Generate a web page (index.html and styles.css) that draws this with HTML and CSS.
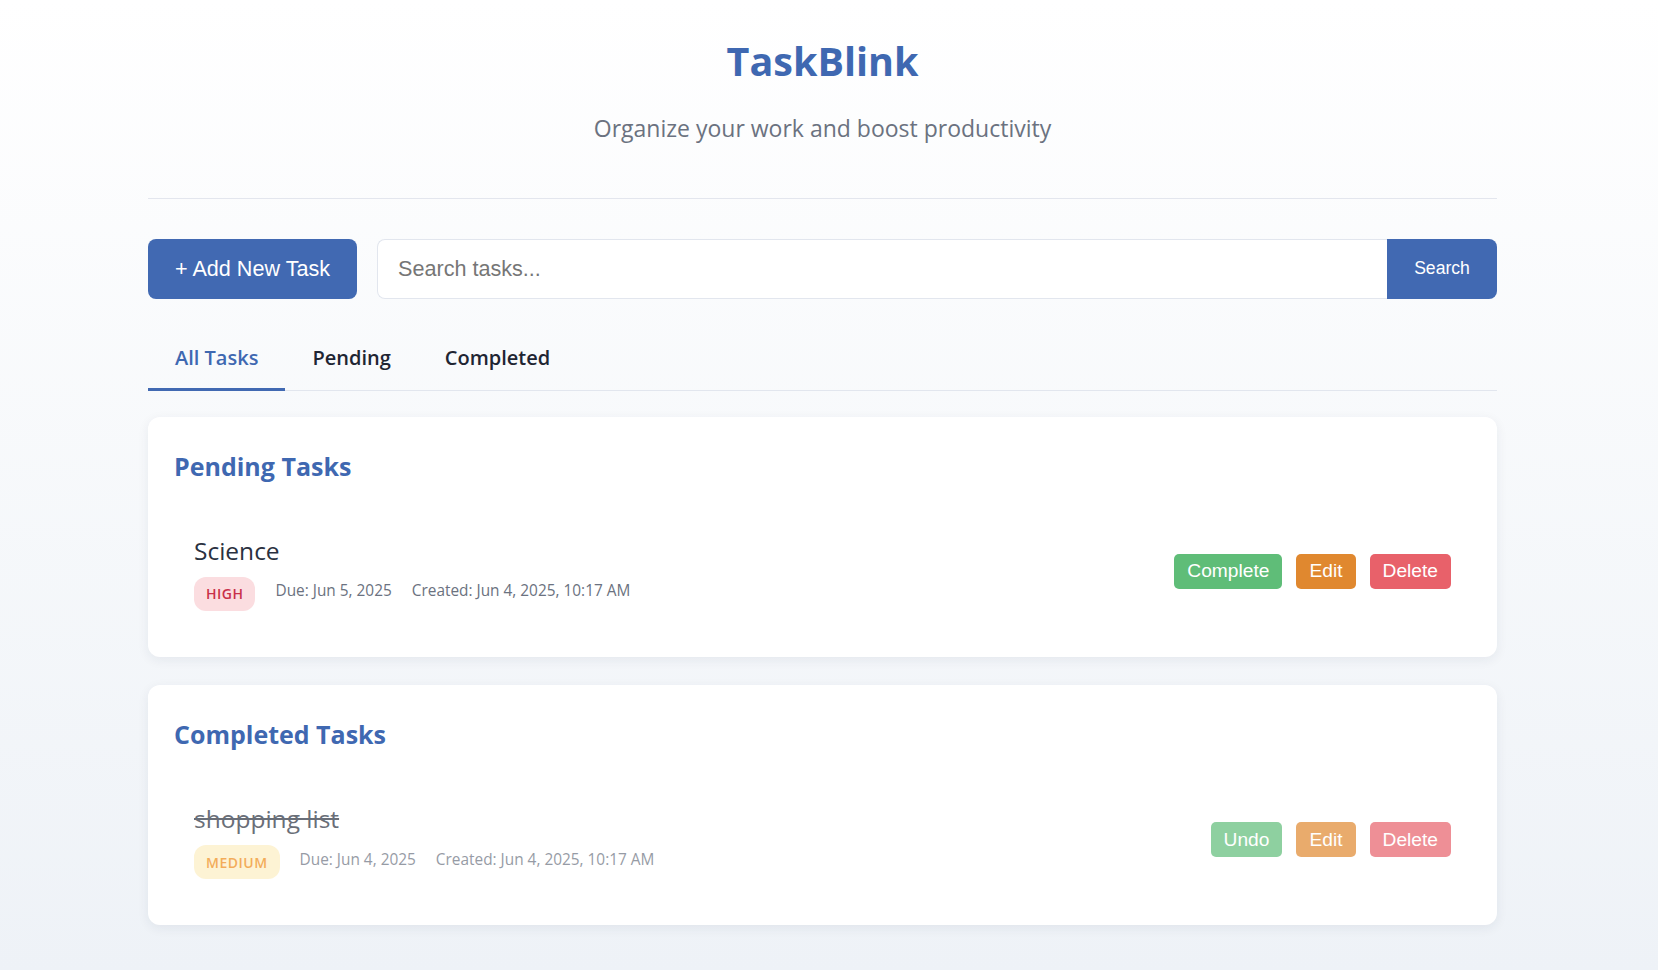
FILE: index.html
```html
<!DOCTYPE html>
<html lang="en">
<head>
<meta charset="utf-8">
<title>TaskBlink</title>
<link rel="stylesheet" href="styles.css">
</head>
<body>
<div class="app">
  <header class="header">
    <h1 class="title">TaskBlink</h1>
    <p class="subtitle">Organize your work and boost productivity</p>
  </header>

  <div class="controls">
    <button class="btn-add">+ Add New Task</button>
    <div class="search">
      <input class="search-input" type="text" placeholder="Search tasks...">
      <button class="search-btn">Search</button>
    </div>
  </div>

  <nav class="tabs">
    <button class="tab active">All Tasks</button>
    <button class="tab">Pending</button>
    <button class="tab">Completed</button>
  </nav>

  <section class="card">
    <h2 class="card-title">Pending Tasks</h2>
    <div class="task">
      <div class="task-info">
        <h3 class="task-title">Science</h3>
        <div class="meta">
          <span class="badge badge-high">HIGH</span>
          <span class="meta-text">Due: Jun 5, 2025</span>
          <span class="meta-text">Created: Jun 4, 2025, 10:17 AM</span>
        </div>
      </div>
      <div class="actions">
        <button class="btn btn-green">Complete</button>
        <button class="btn btn-orange">Edit</button>
        <button class="btn btn-red">Delete</button>
      </div>
    </div>
  </section>

  <section class="card">
    <h2 class="card-title">Completed Tasks</h2>
    <div class="task task-done">
      <div class="task-info">
        <h3 class="task-title">shopping list</h3>
        <div class="meta">
          <span class="badge badge-medium">MEDIUM</span>
          <span class="meta-text">Due: Jun 4, 2025</span>
          <span class="meta-text">Created: Jun 4, 2025, 10:17 AM</span>
        </div>
      </div>
      <div class="actions">
        <button class="btn btn-green">Undo</button>
        <button class="btn btn-orange">Edit</button>
        <button class="btn btn-red">Delete</button>
      </div>
    </div>
  </section>
</div>
</body>
</html>
```

FILE: styles.css
```css
* {
  box-sizing: border-box;
}

html,
body {
  margin: 0;
}

body {
  font-family: "Segoe UI", "Open Sans", "Noto Sans", sans-serif;
  background: linear-gradient(180deg, #ffffff 0%, #eef2f7 100%);
  min-height: 100vh;
  color: #2d3748;
  padding: 0 13px 0 0;
}

.app {
  max-width: 1349px;
  margin: 0 auto;
  padding-bottom: 40px;
}

/* Header */
.header {
  text-align: center;
  padding: 38px 0 55px;
  border-bottom: 1px solid #e3e6ee;
}

.title {
  margin: 0;
  font-size: 39.5px;
  line-height: 1.2;
  font-weight: 700;
  color: #3f68b1;
}

.subtitle {
  margin: 30px 0 0;
  font-size: 23px;
  line-height: 1.2;
  color: #6b7280;
}

/* Controls */
.controls {
  display: flex;
  gap: 20px;
  margin-top: 40px;
}

.btn-add {
  height: 60px;
  padding: 0 27px;
  border: none;
  border-radius: 8px;
  background: #4169b2;
  color: #fff;
  font-family: "Liberation Sans", Arial, sans-serif;
  font-size: 21.6px;
  cursor: pointer;
}

.search {
  flex: 1;
  display: flex;
}

.search-input {
  flex: 1;
  height: 60px;
  padding: 0 20px;
  border: 1px solid #e2e6ee;
  border-right: none;
  border-radius: 8px 0 0 8px;
  background: #fff;
  font-family: "Liberation Sans", Arial, sans-serif;
  font-size: 21.6px;
  color: #333;
  outline: none;
}

.search-input::placeholder {
  color: #767676;
}

.search-btn {
  width: 110px;
  height: 60px;
  border: none;
  border-radius: 0 8px 8px 0;
  background: #4169b2;
  color: #fff;
  font-family: "Liberation Sans", Arial, sans-serif;
  font-size: 17.6px;
  cursor: pointer;
}

/* Tabs */
.tabs {
  display: flex;
  margin-top: 30px;
  border-bottom: 1px solid #e2e6ee;
}

.tab {
  padding: 17px 27px 17px;
  margin-bottom: -1px;
  border: none;
  border-bottom: 3px solid transparent;
  background: none;
  font-family: inherit;
  font-size: 20px;
  line-height: 1.23;
  font-weight: 600;
  color: #1f2533;
  cursor: pointer;
}

.tab.active {
  color: #3f68b1;
  border-bottom-color: #4169b2;
}

/* Cards */
.card {
  margin-top: 26px;
  padding: 26px;
  background: #fff;
  border-radius: 12px;
  box-shadow: 0 3px 12px rgba(30, 40, 70, 0.07);
}

.card + .card {
  margin-top: 28px;
}

.card-title {
  margin: 8px 0 35px;
  font-size: 25px;
  line-height: 1.2;
  font-weight: 700;
  color: #3f68b1;
}

.task {
  display: flex;
  align-items: center;
  justify-content: space-between;
  padding: 20px;
}

.task-title {
  margin: 0;
  font-size: 24.5px;
  line-height: 1.2;
  font-weight: 400;
  color: #2a3140;
}

.meta {
  display: flex;
  align-items: center;
  gap: 20px;
  margin-top: 12px;
}

.meta-text {
  font-size: 15.4px;
  line-height: 1.2;
  color: #6b7280;
  margin-bottom: 5px;
}

.badge {
  display: inline-flex;
  align-items: center;
  height: 34px;
  padding: 0 12px;
  border-radius: 12px;
  font-size: 14px;
  font-weight: 600;
  letter-spacing: 0.5px;
}

.badge-high {
  background: #fbdde0;
  color: #c9304a;
}

.badge-medium {
  background: #fdefc3;
  color: #ee8a12;
}

.actions {
  display: flex;
  gap: 14px;
  margin-bottom: 4px;
}

.btn {
  height: 35px;
  padding: 0 13px;
  border: none;
  border-radius: 5px;
  color: #fff;
  font-family: "Liberation Sans", Arial, sans-serif;
  font-size: 19.2px;
  cursor: pointer;
}

.btn-green {
  background: #5fbd78;
}

.btn-orange {
  background: #e0882f;
}

.btn-red {
  background: #e8616a;
}

.task-done {
  opacity: 0.7;
}

.task-done .task-title {
  text-decoration: line-through;
}
```
